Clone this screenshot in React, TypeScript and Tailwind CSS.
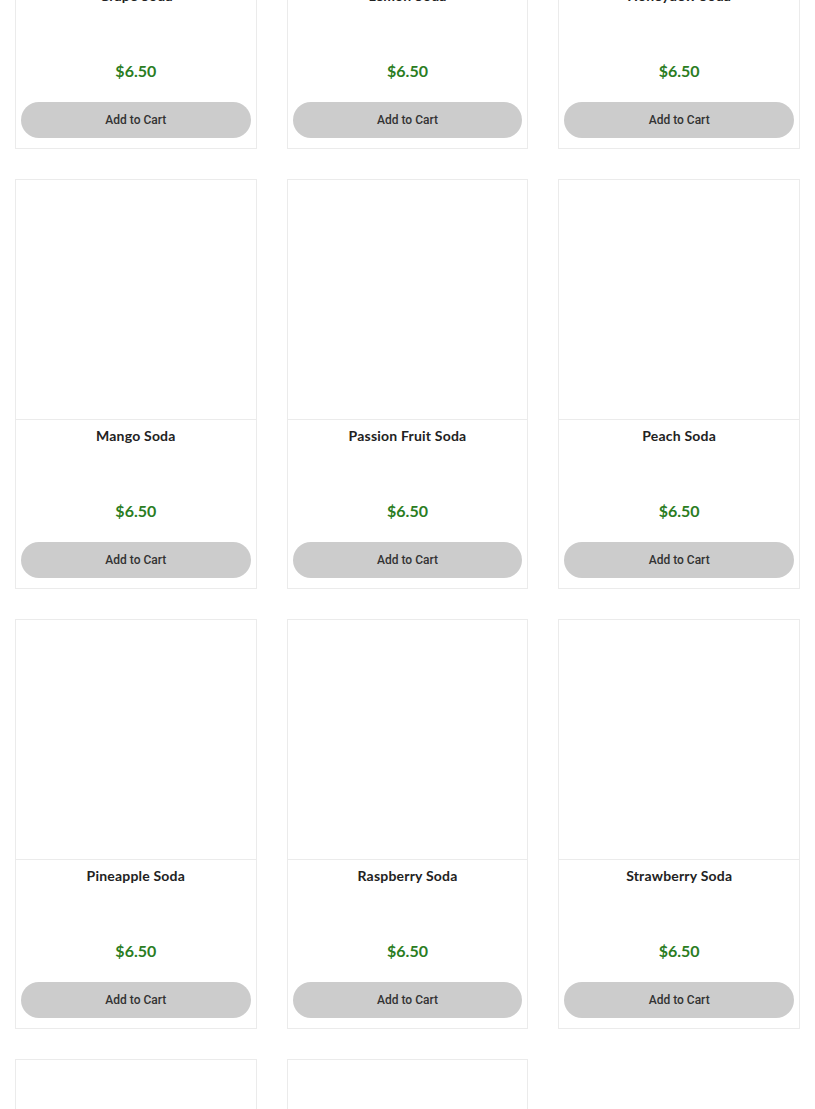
const PRODUCTS = [
  "Grape Soda",
  "Lemon Soda",
  "Honeydew Soda",
  "Mango Soda",
  "Passion Fruit Soda",
  "Peach Soda",
  "Pineapple Soda",
  "Raspberry Soda",
  "Strawberry Soda",
  "Tangerine Soda",
  "Vanilla Soda",
];

function ProductCard({ name }: { name: string }) {
  return (
    <div className="flex flex-col border border-[#ebebeb] bg-white">
      {/* image placeholder */}
      <div className="h-[240px] border-b border-[#ebebeb]" />
      <div className="flex flex-col items-center pt-[6px] pb-[10px]">
        <h3 className="h-[60px] text-center text-[14px] font-bold leading-[20px] tracking-[0.2px] text-[#222] [font-family:'Lato','Open_Sans',sans-serif]">
          {name}
        </h3>
        <p className="mt-[15px] text-[16px] font-bold leading-[20px] text-[#2b7d1f] [font-family:'Lato',sans-serif]">
          $6.50
        </p>
        <button className="mt-[21px] h-[36px] w-[calc(100%-10px)] rounded-full bg-[#cccccc] text-[12px] font-medium text-[#333] [font-family:'Roboto',sans-serif]">
          Add to Cart
        </button>
      </div>
    </div>
  );
}

export default function App() {
  return (
    <div className="min-h-screen overflow-hidden bg-white">
      <div className="-mt-[261px] grid grid-cols-3 gap-x-[30px] gap-y-[30px] px-[15px]">
        {PRODUCTS.map((p) => (
          <ProductCard key={p} name={p} />
        ))}
      </div>
    </div>
  );
}
